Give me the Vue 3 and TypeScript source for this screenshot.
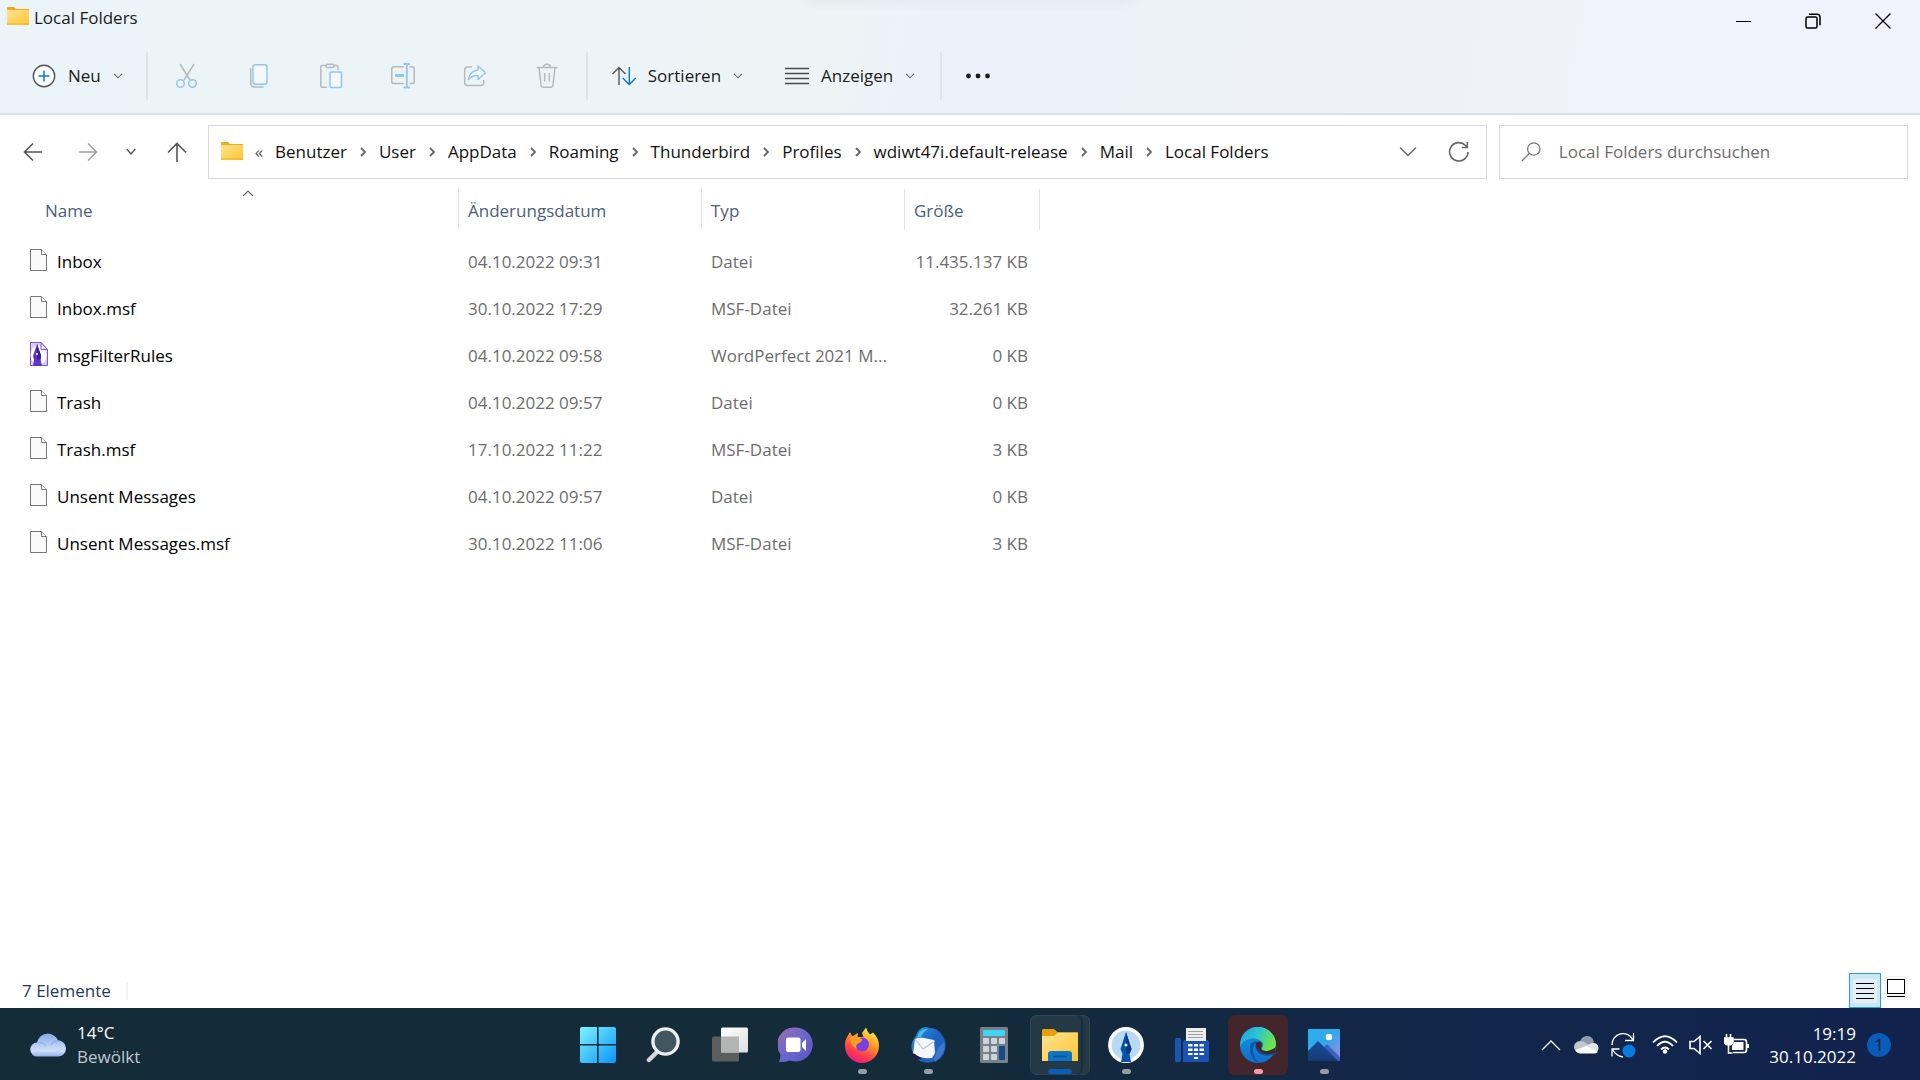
<script setup lang="ts">
interface FileEntry {
  name: string
  date: string
  type: string
  size: string
  kind: 'plain' | 'wordperfect'
}

const files: FileEntry[] = [
  { name: 'Inbox', date: '04.10.2022 09:31', type: 'Datei', size: '11.435.137 KB', kind: 'plain' },
  { name: 'Inbox.msf', date: '30.10.2022 17:29', type: 'MSF-Datei', size: '32.261 KB', kind: 'plain' },
  { name: 'msgFilterRules', date: '04.10.2022 09:58', type: 'WordPerfect 2021 M...', size: '0 KB', kind: 'wordperfect' },
  { name: 'Trash', date: '04.10.2022 09:57', type: 'Datei', size: '0 KB', kind: 'plain' },
  { name: 'Trash.msf', date: '17.10.2022 11:22', type: 'MSF-Datei', size: '3 KB', kind: 'plain' },
  { name: 'Unsent Messages', date: '04.10.2022 09:57', type: 'Datei', size: '0 KB', kind: 'plain' },
  { name: 'Unsent Messages.msf', date: '30.10.2022 11:06', type: 'MSF-Datei', size: '3 KB', kind: 'plain' },
]

const crumbs: string[] = [
  'Benutzer', 'User', 'AppData', 'Roaming', 'Thunderbird', 'Profiles',
  'wdiwt47i.default-release', 'Mail', 'Local Folders',
]
</script>

<template>
  <div class="desktop">
    <svg class="defs" width="0" height="0" aria-hidden="true">
      <defs>
        <linearGradient id="folder" x1="0" y1="0" x2="1" y2="1">
          <stop offset="0" stop-color="#ffe394" /><stop offset="1" stop-color="#fdc62f" />
        </linearGradient>
        <linearGradient id="win" x1="0" y1="0" x2="1" y2="1">
          <stop offset="0" stop-color="#7df3ff" /><stop offset="1" stop-color="#0a94fb" />
        </linearGradient>
        <linearGradient id="cloud" x1="0" y1="0" x2="0" y2="1">
          <stop offset="0" stop-color="#86a9ec" /><stop offset=".75" stop-color="#cfdff8" /><stop offset="1" stop-color="#8fb0ee" />
        </linearGradient>
        <linearGradient id="chat" x1="0" y1="0" x2="1" y2="1">
          <stop offset="0" stop-color="#9b6cab" /><stop offset=".5" stop-color="#6b68cc" /><stop offset="1" stop-color="#5552c2" />
        </linearGradient>
        <linearGradient id="fox" x1=".8" y1="0" x2=".3" y2="1">
          <stop offset="0" stop-color="#fff44f" /><stop offset=".4" stop-color="#ff9a26" /><stop offset=".75" stop-color="#ff3a4f" /><stop offset="1" stop-color="#e8178a" />
        </linearGradient>
        <linearGradient id="bird" x1="0" y1="0" x2="1" y2="1">
          <stop offset="0" stop-color="#2b9ae0" /><stop offset=".5" stop-color="#1c61c0" /><stop offset="1" stop-color="#2a63b8" />
        </linearGradient>
        <linearGradient id="edgeTop" x1="0" y1="0" x2="1" y2=".4">
          <stop offset="0" stop-color="#1b9de2" /><stop offset=".5" stop-color="#2cc3d2" /><stop offset="1" stop-color="#6be54a" />
        </linearGradient>
        <linearGradient id="edgeLeft" x1="0" y1="0" x2="0" y2="1">
          <stop offset="0" stop-color="#1596dc" /><stop offset="1" stop-color="#0f6fcb" />
        </linearGradient>
        <linearGradient id="sky" x1="0" y1="0" x2="1" y2="1">
          <stop offset="0" stop-color="#27b1ee" /><stop offset=".5" stop-color="#35a6ea" /><stop offset="1" stop-color="#a98bdc" />
        </linearGradient>
        <linearGradient id="hill" x1="0" y1="0" x2="0" y2="1">
          <stop offset="0" stop-color="#174c94" /><stop offset="1" stop-color="#153a78" />
        </linearGradient>
        <linearGradient id="pane" x1="0" y1="0" x2="1" y2="1">
          <stop offset="0" stop-color="#ffffff" /><stop offset="1" stop-color="#dcdddd" />
        </linearGradient>
      </defs>
    </svg>

    <header class="ribbon">
      <div class="titlebar">
        <div class="title">
          <svg width="22" height="22" viewBox="0 0 22 22" aria-hidden="true">
            <path d="M0 5V2q0-1 1-1h6l2 2h13v2z" fill="#f0ab14" />
            <path d="M0 4h22v15H0z" fill="url(#folder)" /><path d="M0 18h22" stroke="#eeb021" />
          </svg>
          <h1>Local Folders</h1>
        </div>
        <div class="controls">
          <button type="button" aria-label="Minimieren">
            <svg width="16" height="16" viewBox="0 0 16 16"><path d="M1 8.500h15" stroke="#000" fill="none" /></svg>
          </button>
          <button type="button" aria-label="Verkleinern">
            <svg width="16" height="16" viewBox="0 0 16 16" fill="none" stroke="#000" stroke-width="1.500"><rect x="1" y="4" width="11" height="11" rx="1.500" /><path d="M4 1.200h8q3 0 3 3v8" /></svg>
          </button>
          <button type="button" aria-label="Schließen">
            <svg width="16" height="16" viewBox="0 0 16 16"><path d="M.5.500l15 15m0-15l-15 15" stroke="#000" stroke-width="1.300" /></svg>
          </button>
        </div>
      </div>

      <div class="toolbar">
        <button type="button" class="command new">
          <svg width="24" height="24" viewBox="0 0 24 24" fill="none"><circle cx="12" cy="12" r="10.700" fill="#fbfdfe" stroke="#555" stroke-width="1.400" /><path d="M12 6.500v11M6.500 12h11" stroke="#0a78d4" stroke-width="1.500" /></svg>
          <span>Neu</span>
          <svg class="chev" width="10" height="6" viewBox="0 0 10 6"><path d="M1 .8l4 4 4-4" /></svg>
        </button>
        <i class="divider"></i>
        <button type="button" class="tool" disabled aria-label="Ausschneiden">
          <svg width="24" height="26" viewBox="0 0 24 26" fill="none" stroke-width="1.500"><path d="M5 1l10 16M19 1L9 17" stroke="#b5babd" /><circle cx="5.500" cy="20.500" r="3.800" stroke="#94c6ec" /><circle cx="17.500" cy="20.500" r="3.800" stroke="#94c6ec" /></svg>
        </button>
        <button type="button" class="tool" disabled aria-label="Kopieren">
          <svg width="24" height="26" viewBox="0 0 24 26" fill="none" stroke-width="1.500"><path d="M3.700 5v15q0 4 4 4h9" stroke="#b5babd" /><rect x="6" y="1.700" width="14" height="19.500" rx="2.500" fill="#f3f8fb" stroke="#94c6ec" /></svg>
        </button>
        <button type="button" class="tool" disabled aria-label="Einfügen">
          <svg width="24" height="26" viewBox="0 0 24 26" fill="none" stroke-width="1.500"><path d="M8 24.300H3.300q-1.500 0-1.500-1.500V4q0-1.500 1.500-1.500H7m8 0h2.500Q19 2.500 19 4v3" stroke="#b5babd" /><rect x="7" y="1.200" width="8" height="3.400" rx="1.700" stroke="#b5babd" /><rect x="11" y="9" width="11.500" height="15.500" rx="1.500" fill="#f3f8fb" stroke="#94c6ec" /></svg>
        </button>
        <button type="button" class="tool" disabled aria-label="Umbenennen">
          <svg width="24" height="26" viewBox="0 0 24 26" fill="none" stroke-width="1.500"><path d="M13 3.700H3q-2.200 0-2.200 2.200v12.500q0 2.200 2.200 2.200h10M18.500 3.700H21q2.200 0 2.200 2.200v12.500q0 2.200-2.200 2.200h-2.500" stroke="#b5babd" /><path d="M15.800 1v23M12.500 1h6.500M12.500 24.500h6.500" stroke="#94c6ec" stroke-width="1.800" /><path d="M4 12.500h9" stroke="#94c6ec" stroke-width="3" /></svg>
        </button>
        <button type="button" class="tool" disabled aria-label="Freigeben">
          <svg width="24" height="26" viewBox="0 0 24 26" fill="none" stroke-width="1.500" stroke-linejoin="round"><path d="M9 4H4.500Q1.700 4 1.700 7v12.500q0 3 3 3h13q3 0 3-3V17" stroke="#b5babd" /><path d="M15 3l7.500 6.800L15 16.500v-4Q9 12 5.500 16.500 6.500 8 15 7z" fill="#f3f8fb" stroke="#94c6ec" /></svg>
        </button>
        <button type="button" class="tool" disabled aria-label="Löschen">
          <svg width="24" height="26" viewBox="0 0 24 26" fill="none" stroke="#b5babd" stroke-width="1.500"><path d="M1.500 4.500h21M8.500 4.500q0-3.300 3.500-3.300t3.500 3.300M4 4.500l2 17.500q.3 2.300 2.500 2.300h7q2.200 0 2.500-2.300l2-17.500M9.700 10v8.500m4.600-8.500v8.500" /></svg>
        </button>
        <i class="divider"></i>
        <button type="button" class="command">
          <svg width="24" height="20" viewBox="0 0 24 20" fill="none" stroke-width="1.400"><path d="M7 19V1.500M.5 8L7 1.500 13.500 8" stroke="#555" /><path d="M17.300 1v17.500M10.800 12l6.500 6.500 6.500-6.500" stroke="#0a78d4" /></svg>
          <span>Sortieren</span>
          <svg class="chev" width="10" height="6" viewBox="0 0 10 6"><path d="M1 .8l4 4 4-4" /></svg>
        </button>
        <button type="button" class="command">
          <svg width="24" height="18" viewBox="0 0 24 18" fill="none" stroke="#4c4c4c" stroke-width="1.300"><path d="M0 1.500h24M0 6.500h24M0 11.500h24M0 16.500h24" /></svg>
          <span>Anzeigen</span>
          <svg class="chev" width="10" height="6" viewBox="0 0 10 6"><path d="M1 .8l4 4 4-4" /></svg>
        </button>
        <i class="divider"></i>
        <button type="button" class="more" aria-label="Weitere Optionen">
          <svg width="24" height="6" viewBox="0 0 24 6" fill="#1b1b1b"><circle cx="2.500" cy="3" r="2.400" /><circle cx="12" cy="3" r="2.400" /><circle cx="21.500" cy="3" r="2.400" /></svg>
        </button>
      </div>
    </header>

    <nav class="navbar" aria-label="Navigation">
      <div class="history">
        <button type="button" aria-label="Zurück"><svg width="20" height="20" viewBox="0 0 20 20"><path d="M19 10H1.500M10 1.500L1.500 10l8.500 8.500" stroke="#555" stroke-width="1.600" fill="none" /></svg></button>
        <button type="button" aria-label="Vorwärts"><svg width="20" height="20" viewBox="0 0 20 20"><path d="M1 10h17.500M10 1.500l8.500 8.500-8.500 8.500" stroke="#a0a0a0" stroke-width="1.600" fill="none" /></svg></button>
        <button type="button" class="recent" aria-label="Zuletzt besucht"><svg width="10" height="8" viewBox="0 0 10 8"><path d="M.7 1L5 6l4.300-5" stroke="#555" stroke-width="1.400" fill="none" /></svg></button>
        <button type="button" aria-label="Nach oben"><svg width="20" height="20" viewBox="0 0 20 20"><path d="M10 20V1.500M1 10.500l9-9 9 9" stroke="#555" stroke-width="1.600" fill="none" /></svg></button>
      </div>
      <div class="address">
        <svg width="22" height="22" viewBox="0 0 22 22" aria-hidden="true">
          <path d="M0 5V2q0-1 1-1h6l2 2h13v2z" fill="#f0ab14" />
          <path d="M0 4h22v15H0z" fill="url(#folder)" /><path d="M0 18h22" stroke="#eeb021" />
        </svg>
        <span class="overflow">«</span>
        <ol class="crumbs">
          <li v-for="(crumb, index) in crumbs" :key="crumb">
            <a href="#">{{ crumb }}</a>
            <svg v-if="index < crumbs.length - 1" width="32" height="10" viewBox="0 0 32 10" aria-hidden="true"><path d="M14 1l4 4-4 4" stroke="#666" stroke-width="1.800" fill="none" /></svg>
          </li>
        </ol>
        <button type="button" aria-label="Frühere Orte"><svg width="18" height="12" viewBox="0 0 18 12"><path d="M1 1.500l8 8 8-8" stroke="#666" stroke-width="1.400" fill="none" /></svg></button>
        <button type="button" aria-label="Aktualisieren"><svg width="22" height="22" viewBox="0 0 22 22" fill="none" stroke="#666" stroke-width="1.600"><path d="M20 11A9.200 9.200 0 1 1 17.500 4.500L19 6M19.300 1v5.500h-5.500" /></svg></button>
      </div>
      <label class="search">
        <svg width="20" height="20" viewBox="0 0 20 20" fill="none" stroke="#777" stroke-width="1.300" aria-hidden="true"><circle cx="12.800" cy="7" r="6.200" /><path d="M8.300 11.500L.8 19" /></svg>
        <input type="text" placeholder="Local Folders durchsuchen" aria-label="Local Folders durchsuchen" />
      </label>
    </nav>

    <main class="content">
      <table>
        <colgroup><col class="col-name" /><col class="col-date" /><col class="col-type" /><col class="col-size" /></colgroup>
        <thead>
          <tr>
            <th scope="col" aria-sort="ascending"><button type="button" class="first">Name<svg class="sort" width="12" height="7" viewBox="0 0 12 7"><path d="M1 6l5-5 5 5" stroke="#666" stroke-width="1.200" fill="none" /></svg></button></th>
            <th scope="col"><button type="button">Änderungsdatum</button></th>
            <th scope="col"><button type="button">Typ</button></th>
            <th scope="col"><button type="button">Größe</button></th>
          </tr>
        </thead>
        <tbody>
          <tr v-for="file in files" :key="file.name">
            <td>
              <div class="file">
                <svg v-if="file.kind === 'plain'" width="18" height="24" viewBox="0 0 18 24" aria-hidden="true"><path d="M.5 1.500h11l5 5v16H.5z" fill="#fafafa" stroke="#777" /><path d="M11.500 1.500v5h5" fill="#fff" stroke="#777" /></svg>
                <svg v-else width="18" height="24" viewBox="0 0 18 24" aria-hidden="true"><path d="M.5.500h10.500l6.500 7v16H.5z" fill="#d9cdf9" stroke="#7c5cc4" /><ellipse cx="8.500" cy="13" rx="8" ry="9.500" fill="#fff" /><path d="M11 .5v7h6.500z" fill="#e9e1fd" stroke="#7c5cc4" /><path d="M7 2l4.200 12-.7 3.500L12 24H3l1-6-1-4z" fill="#5a35c8" /><path d="M7 2l4.200 12-.7 3.500H7z" fill="#3f1d96" /><circle cx="7" cy="12" r="1" fill="#fff" /></svg>
                <span>{{ file.name }}</span>
              </div>
            </td>
            <td>{{ file.date }}</td>
            <td>{{ file.type }}</td>
            <td class="size">{{ file.size }}</td>
          </tr>
        </tbody>
      </table>
    </main>

    <footer class="status">
      <span class="count">7 Elemente</span>
      <div class="views">
        <button type="button" class="details" aria-label="Details"><svg width="24" height="24" viewBox="0 0 24 24"><rect width="24" height="24" rx="2" fill="#e6eef6" /><path d="M3 4.500h18M3 9.500h18M3 14.500h18M3 19.500h18" stroke="#000" /></svg></button>
        <button type="button" aria-label="Große Symbole"><svg width="24" height="24" viewBox="0 0 24 24"><rect width="24" height="24" rx="2" fill="#f5f5f5" /><rect x="3.500" y="3.500" width="17" height="14" fill="#fff" stroke="#000" /><path d="M3 20.500h18" stroke="#000" /></svg></button>
      </div>
    </footer>

    <footer class="taskbar">
      <button type="button" class="weather">
        <svg width="36" height="24" viewBox="0 0 36 24"><path d="M7.500 23.500A7 7 0 0 1 7 9.500 11 11 0 0 1 28 7.500a8 8 0 0 1 0 16z" fill="url(#cloud)" /><path d="M7 10q6-2 9 3M21 12q3-5 9-4" stroke="#85a5e2" stroke-width="1.500" fill="none" opacity=".6" /></svg>
        <span class="lines"><span>14°C</span><span class="dim">Bewölkt</span></span>
      </button>

      <div class="apps">
        <button type="button" aria-label="Start"><svg width="36" height="36" viewBox="0 0 36 36"><rect width="36" height="36" rx="2" fill="url(#win)" /><path d="M17.800 0v36M0 17.800h36" stroke="#142c38" stroke-width="1.600" /></svg></button>
        <button type="button" aria-label="Suche"><svg width="36" height="36" viewBox="0 0 36 36"><path d="M11 25l-8 8" stroke="#d5d8da" stroke-width="4.500" stroke-linecap="round" /><circle cx="19.500" cy="14.500" r="12.600" fill="#42565f" stroke="#eceeef" stroke-width="3.400" /></svg></button>
        <button type="button" aria-label="Taskansicht"><svg width="36" height="36" viewBox="0 0 36 36"><rect x="0" y="9.500" width="27" height="25" rx="1.500" fill="#5c5d5e" /><rect x="9" y=".5" width="27" height="25" rx="1.500" fill="url(#pane)" /><path d="M9 9.500h18v16H9z" fill="#b3b5b5" /></svg></button>
        <button type="button" aria-label="Chat"><svg width="36" height="36" viewBox="0 0 36 36"><path d="M18 .5a17 17 0 1 1-6 33q-6 2-11 1.500 2-4 1.200-8A17 17 0 0 1 18 .5z" fill="url(#chat)" /><rect x="8" y="10.500" width="14.500" height="14.500" rx="2" fill="#fff" /><path d="M24 16l4-4v12l-4-4z" fill="#fff" /></svg></button>
        <button type="button" class="running" aria-label="Firefox"><svg width="36" height="36" viewBox="0 0 36 36"><path d="M2.500 11L6 5l2 4q2 0 4-2l2-1-.5 4h6L18 6l4-5.500q1 4 4 7l3-2q6 6 6 13a17 17 0 0 1-34 1q-.5-5 1.500-8.500z" fill="url(#fox)" /><circle cx="18" cy="17.500" r="7" fill="#7b3fe0" /><path d="M6 11q5-4 9 0l3 1q0 3-4 4.500-3 2-1 5-5-1-7-10z" fill="#ff9d1f" /></svg></button>
        <button type="button" class="running" aria-label="Thunderbird"><svg width="36" height="36" viewBox="0 0 36 36"><path d="M6 9Q8 0 17 0q2 1 3 1 8 0 12 7 5 7 3 15-2 9-12 12Q10 38 4 28-2 18 6 9z" fill="url(#bird)" /><path d="M5 12q4-2 9-1l10 2 1 13-3 5Q11 32 3 27z" fill="#f5f7fb" /><path d="M5 12l8 10 12-8" stroke="#b9c2d0" fill="none" stroke-width="1.200" /><path d="M2 26q3 7 10 6l-7-5z" fill="#26124e" /><path d="M24 32l4-11 6-6q3 10-9 20z" fill="#3f78cf" /><path d="M7 11Q9 1 18 2q-5 3-7 8z" fill="#49bbee" /></svg></button>
        <button type="button" aria-label="Rechner"><svg width="36" height="36" viewBox="0 0 36 36"><rect x="4" width="28" height="36" rx="1.500" fill="#76818a" /><rect x="7" y="3" width="22" height="6" rx="1" fill="#43d4f2" /><g fill="#cfd4da"><rect x="7" y="11" width="6" height="6" rx="1" /><rect x="15" y="11" width="6" height="6" rx="1" /><rect x="23" y="11" width="6" height="6" rx="1" /><rect x="7" y="19" width="6" height="6" rx="1" /><rect x="15" y="19" width="6" height="6" rx="1" /><rect x="7" y="27" width="6" height="6" rx="1" /><rect x="15" y="27" width="6" height="6" rx="1" /></g><rect x="23" y="19" width="6" height="14" rx="1" fill="#174a88" /></svg></button>
        <button type="button" class="running active" aria-label="Explorer"><svg width="36" height="36" viewBox="0 0 36 36"><path d="M0 3.500Q0 2 1.500 2H12l4 3.500h19q1 0 1 1V12H0z" fill="#e6a10b" /><path d="M0 9h12l4-3.500h20V34H0z" fill="url(#folder)" /><path d="M6 34v-7q0-3 3-3h18q3 0 3 3v7z" fill="#0e74c4" /><path d="M11 29.500h14" stroke="#07549a" stroke-width="2" /></svg></button>
        <button type="button" class="running" aria-label="WordPerfect"><svg width="36" height="36" viewBox="0 0 36 36"><circle cx="18" cy="18" r="16.200" fill="#b9daf5" stroke="#fff" stroke-width="3.400" /><path d="M18 5l5.500 17-2 5L23 35H13l1.500-8-2-5z" fill="#0752ae" /><path d="M18 5l5.500 17-2 5H18z" fill="#053b84" /><circle cx="18" cy="18" r="1.500" fill="#fff" /></svg></button>
        <button type="button" aria-label="Fax"><svg width="36" height="36" viewBox="0 0 36 36"><rect x="1" y="11" width="6" height="24" rx="1.500" fill="#1c56b4" /><path d="M9 15q0-2 2-2h22q2 0 2 2v18q0 2-2 2H9z" fill="#1a54b4" /><path d="M12 1h20v13H12z" fill="#eee" /><path d="M14 4.500h15M14 7.500h15M14 10.500h15" stroke="#999fa6" stroke-width="1.200" /><g fill="#fff"><path d="M14 17h4.500v2.500H14zm6 0h4v2.500h-4zm5.500 0H30v2.500h-4.500zM14 21.500h4.500V24H14zm6 0h4V24h-4zm5.500 0H30V24h-4.500zM14 26h4.500v2H14zm6 0h4v2h-4zm5.500 0H30v2h-4.500zM20 30h4v2h-4z" /></g></svg></button>
        <button type="button" class="running alert" aria-label="Edge"><svg width="36" height="36" viewBox="0 0 36 36"><circle cx="18" cy="18" r="18" fill="url(#edgeLeft)" /><path d="M1 12A18 18 0 0 1 36 17q0 7-8 7-7 0-6-3 3-4-1-7-5-4-12-2Q3 13 0 20q0-4 1-8z" fill="url(#edgeTop)" /><path d="M10 20q1-7 9-5 4 3 2 6-1 3 7 3 6 0 8-5v9l-2-.500q-8 3-15-1-5-4-3-10-3 1-3 7 0 7 6 12.500-9-3-9-16z" fill="#0d4f9b" opacity=".85" /><path d="M16 16q6-4 6 2.500-2 3 0 4.500 4 3 13-2v5q-9 3-15-1-5-4-4-9z" fill="#43262b" /></svg></button>
        <button type="button" class="running" aria-label="Fotos"><svg width="36" height="36" viewBox="0 0 36 36"><rect x="2" y="2" width="32" height="32" rx="1" fill="url(#sky)" /><path d="M16 22l5-5 13 13v4H16z" fill="#3b62bd" /><path d="M2 24l10-10L32 34H2z" fill="url(#hill)" /><circle cx="23" cy="10" r="3.300" fill="#fff" /></svg></button>
      </div>

      <div class="tray">
        <button type="button" class="overflow-toggle" aria-label="Ausgeblendete Symbole"><svg width="20" height="12" viewBox="0 0 20 12"><path d="M1 11l9-9 9 9" stroke="#fff" stroke-width="1.300" fill="none" /></svg></button>
        <button type="button" aria-label="OneDrive"><svg width="26" height="18" viewBox="0 0 26 18"><path d="M6 8a7 7 0 0 1 14-2l-6 6z" fill="#8e9bac" /><path d="M6 17A6 6 0 0 1 6 5q3 0 6 2l9 7z" fill="#c0c7d0" /><path d="M20 17a5 5 0 1 0-1-10q-3 0-8 4l6 6z" fill="#e0e4ea" /><path d="M2 14l10-4 12 6q-2 1.500-4 1.500H6Q3 17.500 2 14z" fill="#fff" /></svg></button>
        <button type="button" aria-label="Update"><svg width="26" height="26" viewBox="0 0 26 26" fill="none" stroke="#fff" stroke-width="1.300"><path d="M2 13A11 11 0 0 1 23 8M23.500 1v7.500H15M2 24.500V17h7.500M2.500 17.500Q6 24 13 25" /><circle cx="19" cy="19" r="6.500" fill="#0a7bdc" stroke="none" /></svg></button>
        <button type="button" class="status-group" aria-label="Netzwerk, Lautstärke, Akku">
          <svg width="26" height="20" viewBox="0 0 26 20" fill="none" stroke="#fff" stroke-width="1.800"><path d="M1 7.500Q13-5 25 7.500M5 11q8-8.500 16 0M9 14.500q4-4 8 0" /><circle cx="13" cy="16.500" r="2.200" fill="#fff" stroke="none" /></svg>
          <svg width="26" height="20" viewBox="0 0 26 20" fill="none" stroke="#fff" stroke-width="1.600"><path d="M2 6.500h4l6-5v17l-6-5H2zM15.500 6l8 8m0-8l-8 8" /></svg>
          <svg width="26" height="22" viewBox="0 0 26 22" fill="none" stroke="#fff" stroke-width="1.600"><path d="M10 5.500h10q2.500 0 2.500 2.500v8q0 2.500-2.500 2.500H9M4.500 10v9h4" /><path d="M10 8h9.500v8H8v-4z" fill="#fff" stroke="none" /><path d="M23 10h2v4h-2z" fill="#fff" stroke="none" /><path d="M0 4h9v4q-1 3-4.500 3T0 8zM2.500 0v5m4-5v5" fill="#fff" /></svg>
        </button>
        <button type="button" class="clock"><span>19:19</span><span>30.10.2022</span></button>
        <button type="button" class="badge" aria-label="1 Benachrichtigung">1</button>
      </div>
    </footer>
  </div>
</template>

<style>
html,
body {
  margin: 0;
  background: #fff;
}
</style>

<style scoped>
.desktop {
  display: flex;
  flex-direction: column;
  min-height: 100vh;
  background: #fff;
  font: 17px/24px "Open Sans", "Noto Sans", sans-serif;
  color: #1b1b1b;
}
.defs { position: absolute; }
svg { display: block; flex: none; }
button {
  display: flex;
  align-items: center;
  justify-content: center;
  margin: 0;
  padding: 0;
  border: 0;
  background: none;
  color: inherit;
  font: inherit;
}

.ribbon {
  position: relative;
  padding-bottom: 3px;
  border-bottom: 2px solid #dce1e6;
  background: linear-gradient(100deg, #ebf4f8 0%, #ecf4f6 44%, #edf2fa 48%, #edf2fa 57%, #edf2f6 60%, #eff2f6 81%, #f0f3fb 83%);
  overflow: hidden;
}
.ribbon::before {
  content: "";
  position: absolute;
  top: -10px;
  left: 42%;
  width: 17%;
  height: 8px;
  box-shadow: 0 0 14px rgba(60, 70, 90, 0.14);
}
.titlebar {
  display: flex;
  justify-content: space-between;
  height: 42px;
}
.title {
  display: flex;
  align-items: center;
  gap: 5px;
  padding: 0 0 6px 7px;
}
.title svg { align-self: flex-start; margin-top: 6px; }
h1 { margin: 0; font: inherit; }
.controls { display: flex; padding-right: 2px; }
.controls button { width: 70px; }

.toolbar {
  display: flex;
  align-items: center;
  height: 68px;
}
.divider {
  width: 2px;
  height: 48px;
  background: #dde5e9;
}
.command { gap: 12px; padding: 0 22px 0 24px; }
.command.new { padding: 0 23px 0 32px; }
.command + .command { padding: 0 25px 0 20px; }
.chev path { fill: none; stroke: #666; stroke-width: 1.1; }
.tool { width: 72px; height: 48px; }
.divider + .tool { margin-left: 3px; }
.tool:nth-of-type(7) { margin-right: 3px; }
.more { width: 72px; height: 48px; }

.navbar {
  display: grid;
  grid-template-columns: 208px 25fr 12px 8fr;
  padding: 10px 12px 10px 0;
}
.history {
  display: flex;
  align-items: center;
  padding-left: 5px;
}
.history button { width: 55px; height: 54px; }
.history .recent { width: 32px; }
.history button:last-child { width: 60px; }
.address,
.search {
  display: flex;
  align-items: center;
  height: 54px;
  box-sizing: border-box;
  border: 1px solid #d9d9d9;
  background: #fff;
}
.address { padding: 0 1px 0 12px; color: #111; }
.overflow { width: 32px; text-align: center; color: #555; }
.crumbs {
  display: flex;
  flex: 1;
  margin: 0;
  padding: 0;
  list-style: none;
}
.crumbs li { display: flex; align-items: center; white-space: nowrap; }
.crumbs a { color: inherit; text-decoration: none; }
.address button { width: 51px; height: 52px; }
.search { grid-column: 4; gap: 18px; padding: 0 21px; }
.search input {
  flex: 1;
  min-width: 0;
  padding: 0;
  border: 0;
  outline: 0;
  background: none;
  color: #1b1b1b;
  font: inherit;
}
.search input::placeholder { color: #6d6d6d; opacity: 1; }

.content { flex: 1; }
table {
  table-layout: fixed;
  width: 1040px;
  max-width: 100%;
  border-collapse: collapse;
}
.col-name { width: 459px; }
.col-date { width: 243px; }
.col-type { width: 203px; }
.col-size { width: 135px; }
th { padding: 0 0 8px; font-weight: 400; color: #4c607a; }
th button {
  position: relative;
  justify-content: flex-start;
  width: 100%;
  height: 41px;
  padding: 3px 0 0 9px;
  border-right: 1px solid #e2e2e2;
}
th .first { padding-left: 45px; }
.sort { position: absolute; top: 1px; left: 242px; }
td { height: 47px; padding: 0 0 0 9px; color: #6d6d6d; white-space: nowrap; }
td:first-child { padding-left: 30px; }
td.size { padding: 0 12px 0 0; text-align: right; }
.file { display: flex; align-items: center; gap: 9px; color: #000; }
.file svg { margin-bottom: 4px; }

.status {
  display: flex;
  align-items: center;
  justify-content: space-between;
  height: 35px;
  padding: 0 10px 0 22px;
  color: #1e395b;
}
.count { padding-right: 15px; border-right: 2px solid #f3f3f3; line-height: 18px; }
.views { display: flex; gap: 1px; }
.views button { width: 28px; height: 35px; padding-bottom: 6px; box-sizing: border-box; }
.views .details { width: 32px; padding: 0; border: 1px solid #26a0da; background: #cbe8f6; }

.taskbar {
  display: grid;
  grid-template-columns: 1fr auto 1fr;
  align-items: center;
  height: 72px;
  padding: 2px 0 0 2px;
  box-sizing: border-box;
  background: linear-gradient(90deg, #142c38, #142b3a 50%, #12264a 75%, #11234d);
  color: #fff;
}
.weather { justify-self: start; gap: 11px; padding-left: 28px; }
.lines { display: flex; flex-direction: column; align-items: flex-start; }
.dim { color: #c0c8cc; }
.apps { display: flex; gap: 6px; }
.apps button { position: relative; width: 60px; height: 60px; border-radius: 7px; }
.running::after {
  content: "";
  position: absolute;
  bottom: 1px;
  left: 26px;
  width: 9px;
  height: 5px;
  border-radius: 3px;
  background: #959da3;
}
.apps .active { background: #243945; box-shadow: inset 0 0 0 1px #30444f; }
.active::before {
  content: "";
  position: absolute;
  inset: 0 7px 0 0;
  border-right: 2px solid #172e3a;
  border-radius: 7px;
}
.active::after { left: 18px; width: 24px; background: #0a5cb8; }
.apps .alert { background: #43262b; }
.alert::after { background: #ff9aa5; }
.tray { display: flex; align-items: center; justify-self: end; padding-right: 29px; }
.tray button { height: 48px; padding: 0 5px; }
.tray .overflow-toggle { padding-right: 8px; }
.tray .status-group { gap: 10px; padding: 0 10px 0 11px; }
.tray .clock { flex-direction: column; align-items: flex-end; padding: 0 11px 0 9px; line-height: 23px; }
.tray .badge {
  width: 24px;
  height: 24px;
  padding: 0;
  border-radius: 50%;
  background: #0a5cb8;
  color: #0c1b30;
}
</style>
